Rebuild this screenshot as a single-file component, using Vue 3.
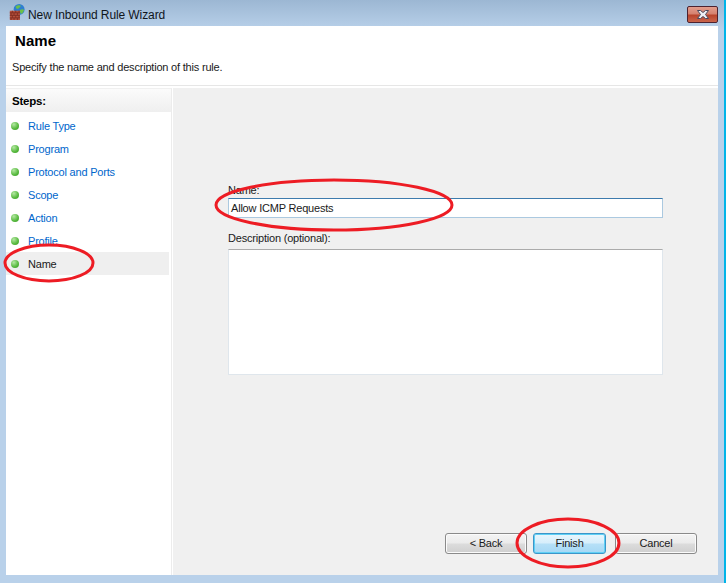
<template>
  <div class="window">
    <div class="titlebar">
      <svg class="app-icon" width="16" height="16" viewBox="0 0 19 19">
        <circle cx="12" cy="6.500" r="6.500" fill="#2f7fd0" />
        <path d="M8 3c2-2 5-2 6-1 0 2-3 2-3 4-2 0-3-1-3-3zM13 7c2-1 4-1 5 0-1 3-2 4-4 5 0-2-2-3-1-5z" fill="#6cc04a" />
        <rect x="1" y="8" width="12" height="11" fill="#b5503c" />
        <path d="M1 10.500h12M1 13.500h12M1 16.500h12M4 8v2.500M8 8v2.500M12 8v2.500M2.500 10.500v3M6 10.500v3M10 10.500v3M4 13.500v3M8 13.500v3M12 13.500v3M2.500 16.500V19M6 16.500V19M10 16.500V19" stroke="#7d2c20" stroke-width="1" fill="none" />
      </svg>
      <span class="title">New Inbound Rule Wizard</span>
      <div class="close">
        <svg width="16" height="11" viewBox="0 0 16 11">
          <path d="M2.500 1.500h3l2.500 2 2.500-2h3L10.500 5.500l3 4h-3L8 7.500l-2.500 2h-3l3-4z" fill="#eef0f4" stroke="#4a4a5e" stroke-width="1" />
        </svg>
      </div>
    </div>

    <div class="client">
      <div class="header">
        <h1>Name</h1>
        <p>Specify the name and description of this rule.</p>
      </div>
      <div class="body">
        <aside class="steps">
          <div class="steps-head">Steps:</div>
          <ul>
            <li v-for="step in steps" :key="step" :class="{ active: step === 'Name' }">
              <span class="dot"></span>
              <span class="step-label">{{ step }}</span>
            </li>
          </ul>
        </aside>
        <main class="content">
          <div class="form">
            <label>Name:</label>
            <div class="input">Allow ICMP Requests</div>
            <label class="desc-label">Description (optional):</label>
            <div class="textarea"></div>
          </div>
          <div class="buttons">
            <div class="btn">&lt; Back</div>
            <div class="btn primary">Finish</div>
            <div class="btn cancel">Cancel</div>
          </div>
        </main>
      </div>
    </div>

    <svg class="marks" width="726" height="583" viewBox="0 0 726 583">
      <ellipse cx="49" cy="263" rx="44" ry="18" />
      <ellipse cx="334" cy="205" rx="118" ry="25" />
      <ellipse cx="568" cy="543" rx="51" ry="24" />
    </svg>
  </div>
</template>

<script setup>
const steps = ["Rule Type", "Program", "Protocol and Ports", "Scope", "Action", "Profile", "Name"];
</script>

<style>
html,
body {
  margin: 0;
  background: #b9d1ea;
}
</style>

<style scoped>
.window {
  position: relative;
  width: 726px;
  height: 583px;
  box-sizing: border-box;
  padding: 0 6px 8px 6px;
  background: linear-gradient(180deg, #9cb7d3 0, #b9d1ea 30px);
  border-right: 2px solid #00b4e8;
  font-family: "Liberation Sans", sans-serif;
  font-size: 11px;
  letter-spacing: -0.2px;
  color: #1a1a1a;
  overflow: hidden;
}

.titlebar {
  height: 26px;
  display: flex;
  align-items: center;
  position: relative;
}

.app-icon {
  margin: -2px 3px 0 3px;
}

.title {
  font-size: 12px;
  letter-spacing: -0.1px;
  color: #10151c;
  padding-top: 4px;
}

.close {
  position: absolute;
  right: 0;
  top: 6px;
  width: 29px;
  height: 15px;
  display: flex;
  align-items: center;
  justify-content: center;
  border: 1px solid #4c2230;
  border-radius: 2px;
  background: linear-gradient(180deg, #e29d8d 0, #d58270 45%, #b8442c 55%, #c9654c 100%);
}

.client {
  height: 549px;
  display: flex;
  flex-direction: column;
  background: #fff;
}

.header {
  height: 60px;
  box-sizing: border-box;
  padding: 6px 0 0 9px;
  border-bottom: 1px solid #e6e6e6;
}

.header h1 {
  margin: 0;
  font-size: 15px;
  line-height: 18px;
  font-weight: 700;
  color: #000;
  letter-spacing: 0.1px;
}

.header p {
  margin: 9px 0 0 -3px;
  line-height: 16px;
}

.body {
  flex: 1;
  display: flex;
  padding-top: 2px;
}

.steps {
  width: 166px;
  border-right: 1px solid #ececec;
  border-top: 1px solid #f0f0f0;
  box-sizing: border-box;
}

.steps-head {
  height: 23px;
  padding-left: 6px;
  line-height: 25px;
  font-weight: 700;
  font-size: 11.500px;
  color: #000;
  background: linear-gradient(180deg, #fbfbfb, #efefef);
}

.steps ul {
  margin: 0;
  padding: 2px 0 0;
  list-style: none;
}

.steps li {
  height: 23px;
  display: flex;
  align-items: center;
  padding-left: 5px;
  margin-right: 2px;
  color: #0066cc;
}

.steps li.active {
  background: #efefef;
  color: #1a1a1a;
}

.dot {
  width: 8px;
  height: 8px;
  border-radius: 50%;
  background: radial-gradient(circle at 35% 30%, #b4e8a2, #55b83c 60%, #3f9a2c);
  margin-right: 9px;
}

.content {
  flex: 1;
  margin-left: 1px;
  background: #f0f0f0;
  display: flex;
  flex-direction: column;
  padding: 94px 21px 21px 55px;
}

.form {
  flex: 1;
  display: flex;
  flex-direction: column;
  padding-right: 34px;
}

.form label {
  height: 16px;
  line-height: 16px;
}

.desc-label {
  margin-top: 12px;
}

.input {
  height: 20px;
  box-sizing: border-box;
  padding-left: 2px;
  line-height: 18px;
  background: #fff;
  border: 1px solid #abc9e0;
  border-top-color: #3d7bad;
}

.textarea {
  height: 126px;
  margin-top: 3px;
  box-sizing: border-box;
  background: #fff;
  border: 1px solid #dfe6ec;
  border-top-color: #ababab;
}

.buttons {
  display: flex;
  justify-content: flex-end;
  gap: 6px;
}

.btn {
  width: 82px;
  height: 21px;
  box-sizing: border-box;
  line-height: 19px;
  text-align: center;
  border: 1px solid #8a8a8a;
  border-radius: 3px;
  background: linear-gradient(180deg, #f4f4f4 0, #ebebeb 48%, #dcdcdc 52%, #cfcfcf 100%);
  box-shadow: inset 0 0 0 1px #fbfbfb;
}

.btn.primary {
  width: 73px;
  border-color: #3c95c9;
  background: linear-gradient(180deg, #e9f6fd 0, #d6eefb 48%, #b6e0f7 52%, #a5d8f5 100%);
  box-shadow: inset 0 0 0 1px #5fd0f5;
}

.btn.cancel {
  margin-left: 3px;
}

.marks {
  position: absolute;
  left: 0;
  top: 0;
  pointer-events: none;
}

.marks ellipse {
  fill: none;
  stroke: #ed1c24;
  stroke-width: 3;
}
</style>
